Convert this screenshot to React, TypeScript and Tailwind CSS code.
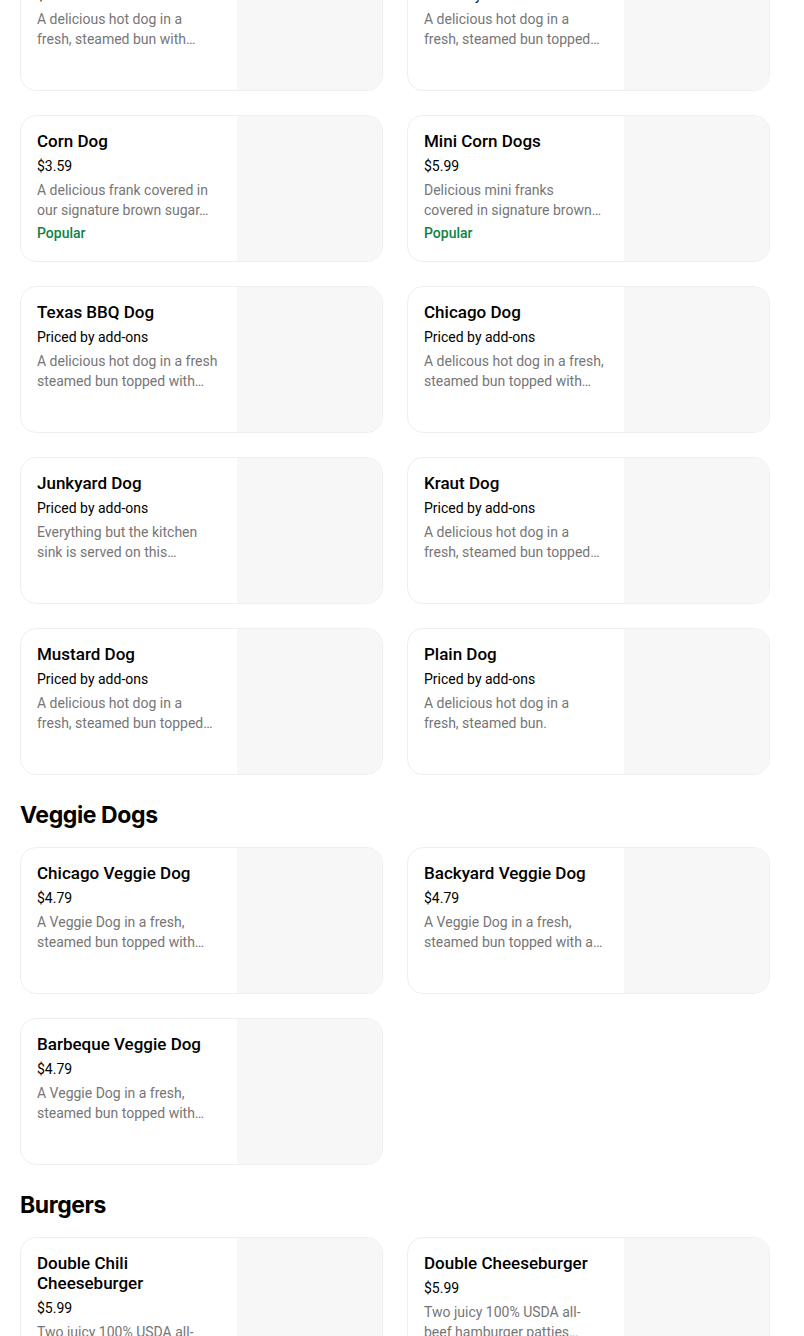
import React from "react";

type Item = {
  title: string;
  price: string;
  desc: [string, string];
  popular?: boolean;
};

const hotDogs: Item[] = [
  { title: "Classic Dog", price: "$3.29", desc: ["A delicious hot dog in a", "fresh, steamed bun with…"] },
  { title: "Backyard Dog", price: "Priced by add-ons", desc: ["A delicious hot dog in a", "fresh, steamed bun topped…"] },
  { title: "Corn Dog", price: "$3.59", desc: ["A delicious frank covered in", "our signature brown sugar…"], popular: true },
  { title: "Mini Corn Dogs", price: "$5.99", desc: ["Delicious mini franks", "covered in signature brown…"], popular: true },
  { title: "Texas BBQ Dog", price: "Priced by add-ons", desc: ["A delicious hot dog in a fresh", "steamed bun topped with…"] },
  { title: "Chicago Dog", price: "Priced by add-ons", desc: ["A delicous hot dog in a fresh,", "steamed bun topped with…"] },
  { title: "Junkyard Dog", price: "Priced by add-ons", desc: ["Everything but the kitchen", "sink is served on this…"] },
  { title: "Kraut Dog", price: "Priced by add-ons", desc: ["A delicious hot dog in a", "fresh, steamed bun topped…"] },
  { title: "Mustard Dog", price: "Priced by add-ons", desc: ["A delicious hot dog in a", "fresh, steamed bun topped…"] },
  { title: "Plain Dog", price: "Priced by add-ons", desc: ["A delicious hot dog in a", "fresh, steamed bun."] },
];

const veggie: Item[] = [
  { title: "Chicago Veggie Dog", price: "$4.79", desc: ["A Veggie Dog in a fresh,", "steamed bun topped with…"] },
  { title: "Backyard Veggie Dog", price: "$4.79", desc: ["A Veggie Dog in a fresh,", "steamed bun topped with a…"] },
  { title: "Barbeque Veggie Dog", price: "$4.79", desc: ["A Veggie Dog in a fresh,", "steamed bun topped with…"] },
];

const burgers: Item[] = [
  { title: "Double Chili Cheeseburger", price: "$5.99", desc: ["Two juicy 100% USDA all-", "beef hamburger patties…"] },
  { title: "Double Cheeseburger", price: "$5.99", desc: ["Two juicy 100% USDA all-", "beef hamburger patties…"] },
];

function Card({ item }: { item: Item }) {
  return (
    <div className="flex h-[147px] overflow-hidden rounded-2xl border border-[#efefef] bg-white">
      <div className="min-w-0 flex-1 px-4 pt-[15px]">
        <div className="text-[17px] font-medium leading-5 text-black">{item.title}</div>
        <div className="mt-[5px] text-[14px] leading-5 text-black">{item.price}</div>
        <div className="mt-[4px] text-[14px] leading-5 text-[#767676]">
          <div className="overflow-hidden whitespace-nowrap">{item.desc[0]}</div>
          <div className="overflow-hidden whitespace-nowrap">{item.desc[1]}</div>
        </div>
        {item.popular && (
          <div className="mt-[3px] text-[14px] font-medium leading-5 text-[#0e8345]">Popular</div>
        )}
      </div>
      <div className="h-full w-[145px] shrink-0 bg-[#f7f7f7]" />
    </div>
  );
}

function Grid({ items }: { items: Item[] }) {
  return (
    <div className="grid grid-cols-2 gap-6">
      {items.map((it, i) => (
        <Card key={i} item={it} />
      ))}
    </div>
  );
}

function Heading({ children }: { children: React.ReactNode }) {
  return (
    <h2
      className="mb-4 pt-6 text-[23px] font-bold leading-8 tracking-[-0.4px] text-black"
      style={{ fontFamily: "Inter, sans-serif" }}
    >
      {children}
    </h2>
  );
}

export default function App() {
  return (
    <div
      className="h-[1336px] overflow-hidden bg-white"
      style={{ fontFamily: "Roboto, 'Noto Sans', sans-serif" }}
    >
      <div className="ml-5 mt-[-56px] w-[750px]">
        <Grid items={hotDogs} />
        <section>
          <Heading>Veggie Dogs</Heading>
          <Grid items={veggie} />
        </section>
        <section>
          <Heading>Burgers</Heading>
          <Grid items={burgers} />
        </section>
      </div>
    </div>
  );
}
